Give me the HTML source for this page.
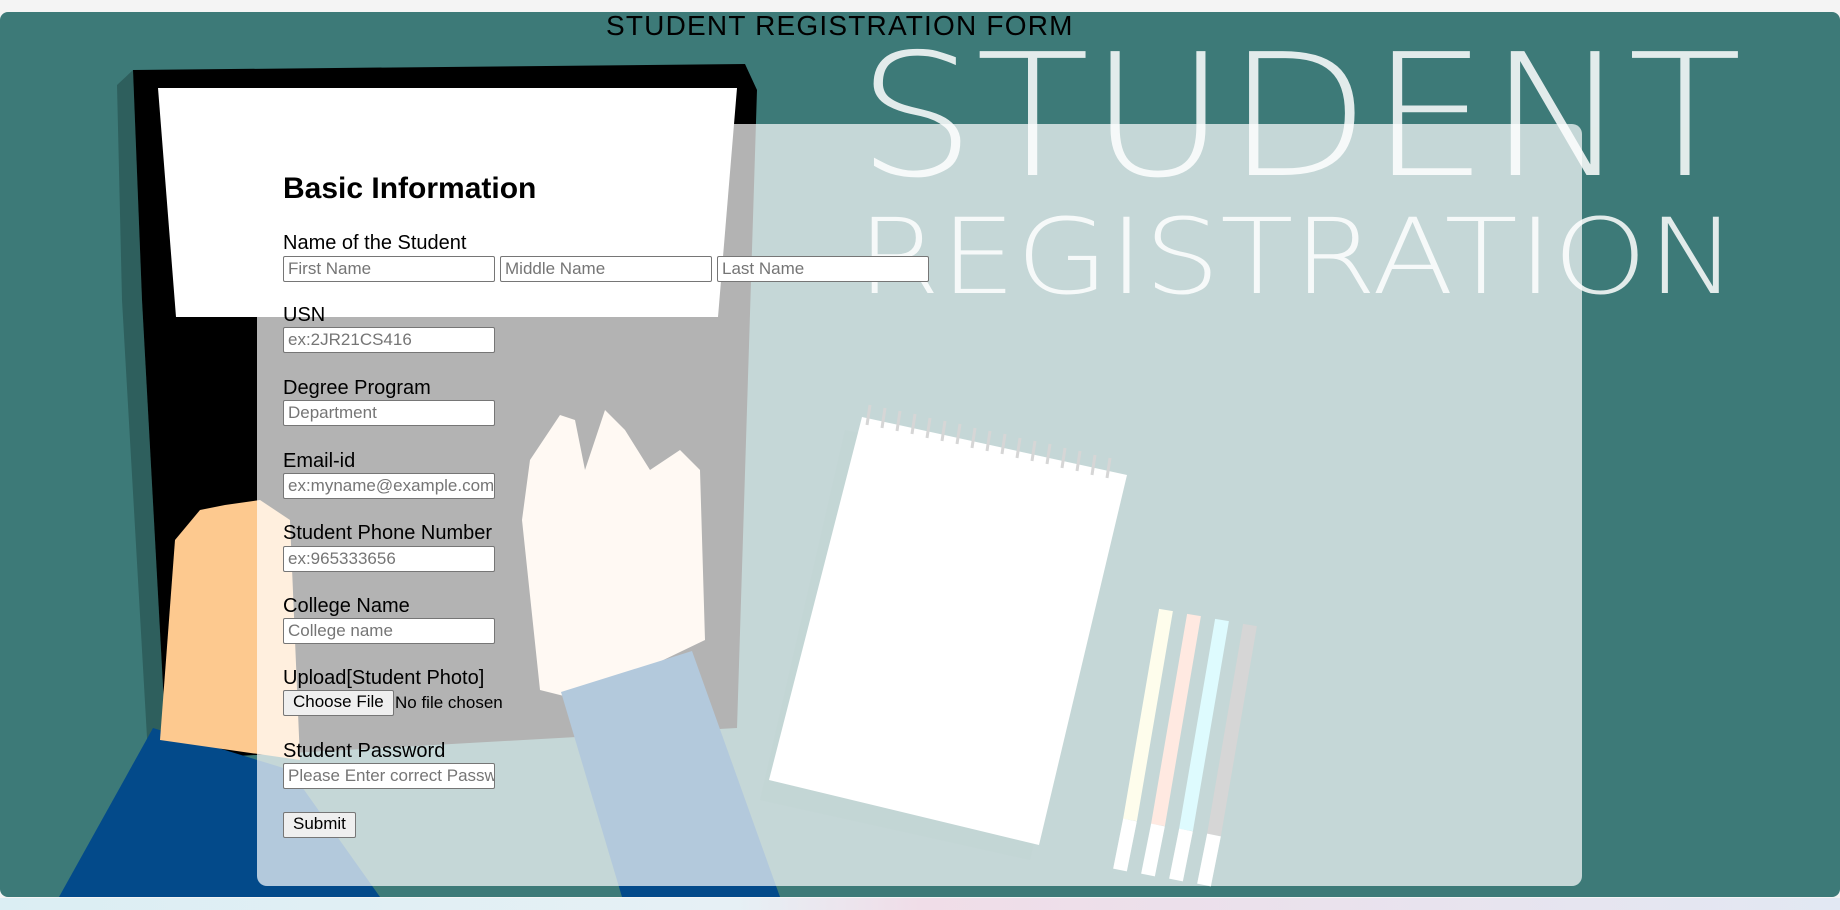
<!DOCTYPE html>
<html><head><meta charset="utf-8"><style>
html,body{margin:0;padding:0;width:1840px;height:910px;overflow:hidden;background:#f4f4f4;font-family:"Liberation Sans",Arial,sans-serif;}
#bg{position:absolute;left:0;top:12px;width:1840px;height:885px;border-radius:8px;overflow:hidden;background:#3d7a78;}
#bottom{position:absolute;left:0;top:898px;width:1840px;height:12px;background:linear-gradient(90deg,#dbeef3,#e6f0f5 40%,#f0dde8 50%,#e2e8f3);}
#title{position:absolute;left:606px;top:10px;font-size:28px;line-height:32px;color:#000;white-space:nowrap;letter-spacing:1.2px}
#panel{position:absolute;left:257px;top:112px;width:1325px;height:762px;border-radius:10px;background:rgba(255,255,255,0.7);}
h2{position:absolute;left:283px;top:172px;margin:0;font-size:30px;font-weight:bold;line-height:34px;}
.l{position:absolute;left:283px;font-size:20px;line-height:22px;color:#000;white-space:nowrap}
.i{position:absolute;width:212px;height:26px;box-sizing:border-box;border:1px solid #767676;background:#fff;font-size:17px;color:#757575;padding:2px 4px;line-height:20px;white-space:nowrap;overflow:hidden;border-radius:2px}
.b{position:absolute;height:26px;box-sizing:border-box;border:1px solid #767676;background:#efefef;border-radius:2px;font-size:17px;line-height:22px;padding:0 9px;color:#000}
</style></head><body>
<div id="bg">
<svg width="1840" height="885" viewBox="0 12 1840 885" xmlns="http://www.w3.org/2000/svg" style="position:absolute;left:0;top:0">
<polygon points="117,85 133,70 142,300 167,760 150,790 122,300" fill="#2e5f5d"/>
<polygon points="133,70 745,64 757,90 737,728 167,760 142,300" fill="#000"/>
<polygon points="158,88 737,88 718,317 176,317" fill="#fff"/>
<polygon points="59,897 153,728 290,770 380,897" fill="#034a8a"/>
<polygon points="175,540 200,510 225,505 260,500 290,520 300,760 160,740" fill="#fdc98f"/>
<polygon points="540,690 522,520 530,460 560,415 575,420 585,470 605,410 625,430 650,470 680,450 700,470 705,640 580,700" fill="#fdebd5"/>
<polygon points="561,692 692,651 780,897 622,897" fill="#034a8a"/>
<polygon points="845,430 1115,490 1030,860 760,800" fill="#2e6e6c" opacity="0.35"/>
<polygon points="862,417 1127,475 1039,845 769,780" fill="#fff"/>
<g stroke="#777" stroke-width="3">
<line x1="870" y1="405" x2="867" y2="425"/><line x1="885" y1="408" x2="882" y2="428"/><line x1="900" y1="411" x2="897" y2="431"/><line x1="915" y1="414" x2="912" y2="434"/><line x1="930" y1="418" x2="927" y2="438"/><line x1="945" y1="421" x2="942" y2="441"/><line x1="960" y1="424" x2="957" y2="444"/><line x1="975" y1="428" x2="972" y2="448"/><line x1="990" y1="431" x2="987" y2="451"/><line x1="1005" y1="434" x2="1002" y2="454"/><line x1="1020" y1="438" x2="1017" y2="458"/><line x1="1035" y1="441" x2="1032" y2="461"/><line x1="1050" y1="444" x2="1047" y2="464"/><line x1="1065" y1="448" x2="1062" y2="468"/><line x1="1080" y1="451" x2="1077" y2="471"/><line x1="1095" y1="455" x2="1092" y2="475"/><line x1="1110" y1="458" x2="1107" y2="478"/>
</g>
<g stroke-width="14" stroke-linecap="butt">
<line x1="1166" y1="610" x2="1130" y2="820" stroke="#fbf7c0"/>
<line x1="1194" y1="615" x2="1158" y2="825" stroke="#ffb49a"/>
<line x1="1222" y1="620" x2="1186" y2="830" stroke="#8ff0fb"/>
<line x1="1250" y1="625" x2="1214" y2="835" stroke="#777"/>
<line x1="1130" y1="820" x2="1120" y2="870" stroke="#fff"/>
<line x1="1158" y1="825" x2="1148" y2="875" stroke="#fff"/>
<line x1="1186" y1="830" x2="1176" y2="880" stroke="#fff"/>
<line x1="1214" y1="835" x2="1204" y2="885" stroke="#fff"/>
</g>
<text x="857" y="175" font-family="DejaVu Sans" font-weight="200" font-size="170" fill="#fff" opacity="0.85" textLength="885" lengthAdjust="spacingAndGlyphs">STUDENT</text>
<text x="857" y="293" font-family="DejaVu Sans" font-weight="200" font-size="104" fill="#fff" opacity="0.85" textLength="880" lengthAdjust="spacingAndGlyphs">REGISTRATION</text>
</svg>
<div id="panel"></div>
</div>
<div id="bottom"></div>
<div id="title">STUDENT REGISTRATION FORM</div>
<h2>Basic Information</h2>
<div class="l" style="top:232px">Name of the Student</div>
<div class="i" style="left:283px;top:256px">First Name</div>
<div class="i" style="left:500px;top:256px">Middle Name</div>
<div class="i" style="left:717px;top:256px">Last Name</div>
<div class="l" style="top:304px">USN</div>
<div class="i" style="left:283px;top:327px">ex:2JR21CS416</div>
<div class="l" style="top:377px">Degree Program</div>
<div class="i" style="left:283px;top:400px">Department</div>
<div class="l" style="top:450px">Email-id</div>
<div class="i" style="left:283px;top:473px">ex:myname@example.com</div>
<div class="l" style="top:522px">Student Phone Number</div>
<div class="i" style="left:283px;top:546px">ex:965333656</div>
<div class="l" style="top:595px">College Name</div>
<div class="i" style="left:283px;top:618px">College name</div>
<div class="l" style="top:667px">Upload[Student Photo]</div>
<div class="b" style="left:283px;top:690px">Choose File</div>
<div class="l" style="left:395px;top:692px;font-size:17px">No file chosen</div>
<div class="l" style="top:740px">Student Password</div>
<div class="i" style="left:283px;top:763px">Please Enter correct Password</div>
<div class="b" style="left:283px;top:812px;padding:0 9px">Submit</div>
</body></html>
